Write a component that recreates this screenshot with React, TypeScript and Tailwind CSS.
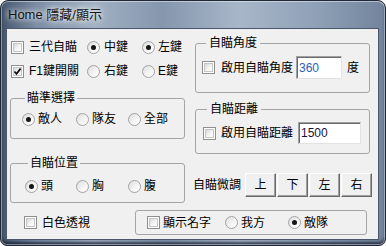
import React from "react";

function CheckBox({ checked }: { checked?: boolean }) {
  return (
    <span className="relative w-[13px] h-[13px] shrink-0 border border-[#8e8f8f] bg-white p-[1px]">
      <span className="block w-full h-full border border-[#c6c6c6] bg-[linear-gradient(135deg,#d8d8d8,#f6f6f6_60%,#ffffff)]" />
      {checked && (
        <svg className="absolute left-0 top-0" width="11" height="11" viewBox="0 0 11 11">
          <path d="M2.5 5.5 L4.5 7.8 L8.6 2.6" fill="none" stroke="#111" strokeWidth="1.7" />
        </svg>
      )}
    </span>
  );
}

function Radio({ checked }: { checked?: boolean }) {
  return (
    <span className="w-[13px] h-[13px] shrink-0 rounded-full border border-[#a2a2a2] bg-[linear-gradient(135deg,#dcdcdc,#f4f4f4_55%,#ffffff)] flex items-center justify-center">
      {checked && <span className="w-[5px] h-[5px] rounded-full bg-[#151515]" />}
    </span>
  );
}

function Btn({ label }: { label: string }) {
  return (
    <div className="w-[31px] h-[24px] flex items-center justify-center bg-[#f0f0f0] border border-t-white border-l-white border-r-[#696969] border-b-[#696969] shadow-[inset_-1px_-1px_0_#a0a0a0]">
      {label}
    </div>
  );
}

function Field({ value, w, blue }: { value: string; w: string; blue?: boolean }) {
  return (
    <div
      className={`${w} h-full bg-white border border-t-[#a0a0a0] border-l-[#a0a0a0] border-r-[#e3e3e3] border-b-[#e3e3e3] shadow-[inset_1px_1px_0_#696969] flex items-center pl-[2px] font-['Liberation_Sans',sans-serif] ${blue ? "text-[#1f5fbf]" : "text-[#1a1040]"}`}
    >
      {value}
    </div>
  );
}

export default function App() {
  return (
    <div className="w-[386px] h-[246px] bg-white">
      <div className="w-full h-full flex flex-col rounded-t-[8px] rounded-b-[7px] border border-[#1f2836] bg-[linear-gradient(90deg,#44546b,#7a8ca4_9%,#a2b1c3_24%,#8597ae_42%,#a8b6c8_62%,#8fa1b7_82%,#72849c)] shadow-[inset_0_0_0_1px_rgba(255,255,255,0.45),inset_0_-3px_3px_rgba(12,22,42,0.75)] pl-[5px] pr-[6px] pb-[5px] font-['Liberation_Sans','Noto_Sans_CJK_TC',sans-serif] text-[12px] leading-[14px]">
        {/* Title bar */}
        <div className="h-[27px] flex items-center pl-[2px] text-[13px] text-[#141414] [text-shadow:0_0_5px_#fff,0_0_9px_rgba(255,255,255,0.85)]">
          Home 隱藏/顯示
        </div>

        {/* Client area */}
        <div className="flex-1 bg-[#f0f0f0] border border-[#4b5668] flex flex-col text-black">
          <div className="flex">
            {/* Left column */}
            <div className="ml-[3px] w-[175px] flex flex-col pt-[8px]">
              <div className="h-[20px] flex items-center">
                <div className="w-[77px] pl-[1px] flex items-center gap-[5px]">
                  <CheckBox />
                  <span>三代自瞄</span>
                </div>
                <div className="w-[55px] flex items-center gap-[4px]">
                  <Radio checked />
                  <span>中鍵</span>
                </div>
                <div className="flex items-center gap-[3px]">
                  <Radio checked />
                  <span>左鍵</span>
                </div>
              </div>
              <div className="mt-[4px] h-[20px] flex items-center">
                <div className="w-[77px] pl-[1px] flex items-center gap-[5px]">
                  <CheckBox checked />
                  <span>F1鍵開關</span>
                </div>
                <div className="w-[55px] flex items-center gap-[4px]">
                  <Radio />
                  <span>右鍵</span>
                </div>
                <div className="flex items-center gap-[3px]">
                  <Radio />
                  <span>E鍵</span>
                </div>
              </div>

              <fieldset className="mt-[10px] rounded-[3px] border border-[#a5a5a5] pt-[4px] pb-[9px] pl-[11px]">
                <legend className="ml-[3px] px-[2px] h-[14px] leading-[14px]">瞄準選擇</legend>
                <div className="h-[20px] flex items-center">
                  <div className="w-[54px] flex items-center gap-[3px]">
                    <Radio checked />
                    <span>敵人</span>
                  </div>
                  <div className="w-[52px] flex items-center gap-[3px]">
                    <Radio />
                    <span>隊友</span>
                  </div>
                  <div className="flex items-center gap-[3px]">
                    <Radio />
                    <span>全部</span>
                  </div>
                </div>
              </fieldset>

              <fieldset className="mt-[17px] rounded-[3px] border border-[#a5a5a5] pt-[6px] pb-[6px] pl-[14px]">
                <legend className="ml-[3px] px-[2px] h-[14px] leading-[14px]">自瞄位置</legend>
                <div className="h-[20px] flex items-center">
                  <div className="w-[51px] flex items-center gap-[3px]">
                    <Radio checked />
                    <span>頭</span>
                  </div>
                  <div className="w-[52px] flex items-center gap-[3px]">
                    <Radio />
                    <span>胸</span>
                  </div>
                  <div className="flex items-center gap-[3px]">
                    <Radio />
                    <span>腹</span>
                  </div>
                </div>
              </fieldset>
            </div>

            {/* Right column */}
            <div className="ml-[8px] flex-1 flex flex-col pt-[7px]">
              <fieldset className="ml-[2px] w-[175px] rounded-[3px] border border-[#a5a5a5] pt-[6px] pb-[13px] pl-[6px]">
                <legend className="ml-[4px] px-[3px] h-[14px] leading-[14px]">自瞄角度</legend>
                <div className="h-[23px] flex items-center">
                  <CheckBox />
                  <span className="ml-[6px]">啟用自瞄角度</span>
                  <div className="ml-[3px] h-full">
                    <Field value="360" w="w-[46px]" blue />
                  </div>
                  <span className="ml-[5px]">度</span>
                </div>
              </fieldset>

              <fieldset className="mt-[9px] ml-[2px] w-[175px] rounded-[3px] border border-[#a5a5a5] pt-[6px] pb-[9px] pl-[7px]">
                <legend className="ml-[4px] px-[3px] h-[14px] leading-[14px]">自瞄距離</legend>
                <div className="h-[22px] flex items-center">
                  <CheckBox />
                  <span className="ml-[5px]">啟用自瞄距離</span>
                  <div className="ml-[5px] h-full">
                    <Field value="1500" w="w-[63px]" />
                  </div>
                </div>
              </fieldset>

              <div className="mt-[19px] h-[24px] flex items-center">
                <span className="w-[48px]">自瞄微調</span>
                <div className="ml-[4px] flex gap-[1px]">
                  <Btn label="上" />
                  <Btn label="下" />
                  <Btn label="左" />
                  <Btn label="右" />
                </div>
              </div>
            </div>
          </div>

          {/* Bottom row */}
          <div className="mt-[7px] flex items-center">
            <div className="ml-[17px] w-[111px] flex items-center gap-[5px]">
              <CheckBox />
              <span>白色透視</span>
            </div>
            <div className="w-[232px] h-[25px] rounded-[3px] border border-[#a5a5a5] flex items-center pl-[11px]">
              <div className="w-[78px] flex items-center gap-[3px]">
                <CheckBox />
                <span>顯示名字</span>
              </div>
              <div className="w-[63px] flex items-center gap-[3px]">
                <Radio />
                <span>我方</span>
              </div>
              <div className="flex items-center gap-[3px]">
                <Radio checked />
                <span>敵隊</span>
              </div>
            </div>
          </div>
        </div>
      </div>
    </div>
  );
}
